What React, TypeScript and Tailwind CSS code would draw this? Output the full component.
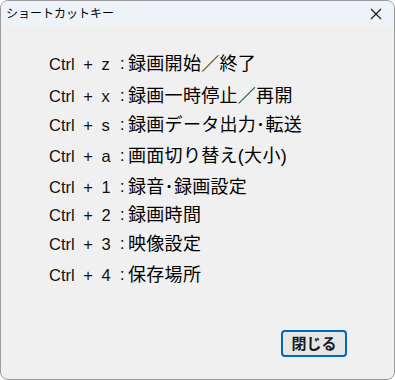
const shortcuts = [
  { key: 'Ctrl + z', label: '録画開始／終了', mt: 'mt-[58px]' },
  { key: 'Ctrl + x', label: '録画一時停止／再開', mt: 'mt-[12px]' },
  { key: 'Ctrl + s', label: '録画データ出力･転送', mt: 'mt-[9px]' },
  { key: 'Ctrl + a', label: '画面切り替え(大小)', mt: 'mt-[11px]' },
  { key: 'Ctrl + 1', label: '録音･録画設定', mt: 'mt-[11px]' },
  { key: 'Ctrl + 2', label: '録画時間', mt: 'mt-[8px]' },
  { key: 'Ctrl + 3', label: '映像設定', mt: 'mt-[9px]' },
  { key: 'Ctrl + 4', label: '保存場所', mt: 'mt-[11px]' },
];

export default function App() {
  return (
    <div className="w-[395px] h-[380px] bg-white">
      <div
        className="w-full h-full flex flex-col rounded-lg border border-[#9a9a9a] overflow-hidden bg-[#f0f0f0]"
        style={{ fontFamily: '"Liberation Sans", "Noto Sans CJK JP", sans-serif' }}
      >
        <div className="h-[25px] shrink-0 flex items-center justify-between bg-[#eef3f9] pl-[5px] pr-[12px]">
          <span className="text-[12px] text-black leading-none">ショートカットキー</span>
          <svg width="12" height="12" viewBox="0 0 12 12" className="text-[#1a1a1a]">
            <path d="M1 1 L11 11 M11 1 L1 11" stroke="currentColor" strokeWidth="1.2" />
          </svg>
        </div>
        <div className="flex-1 flex flex-col pl-[48px] text-black">
          <div className="-mt-[30px]" />
          {shortcuts.map(s => (
            <div key={s.key} className={`flex items-center h-[20px] leading-[20px] ${s.mt}`}>
              <span className="w-[71px] whitespace-pre text-[16.5px] text-[#111] [word-spacing:4px]">{s.key}</span>
              <span className="w-[8px] text-[16px]">:</span>
              <span className="text-[18px] tracking-[0.3px]">{s.label}</span>
            </div>
          ))}
          <div className="flex-1" />
          <div className="flex justify-end pr-[47px] pb-[22px]">
            <button className="w-[66px] h-[27px] rounded-[4px] border-2 border-[#0067c0] bg-[#e6e6e6] text-[15px] font-bold text-[#1a1a1a] leading-none">
              閉じる
            </button>
          </div>
        </div>
      </div>
    </div>
  );
}
